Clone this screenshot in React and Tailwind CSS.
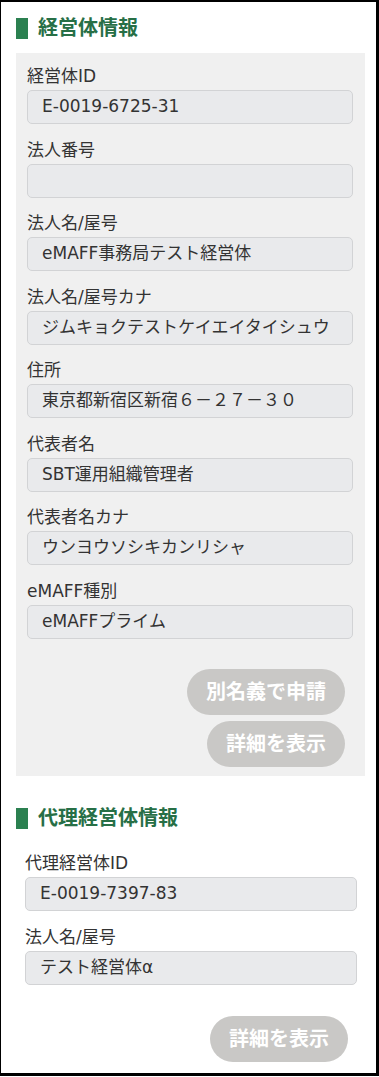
import React from 'react';

const FONT = { fontFamily: '"DejaVu Sans", "Noto Sans CJK JP", sans-serif' };

const agent = [
  { label: '経営体ID', value: 'E-0019-6725-31' },
  { label: '法人番号', value: '' },
  { label: '法人名/屋号', value: 'eMAFF事務局テスト経営体' },
  { label: '法人名/屋号カナ', value: 'ジムキョクテストケイエイタイシュウ' },
  { label: '住所', value: '東京都新宿区新宿６－２７－３０' },
  { label: '代表者名', value: 'SBT運用組織管理者' },
  { label: '代表者名カナ', value: 'ウンヨウソシキカンリシャ' },
  { label: 'eMAFF種別', value: 'eMAFFプライム' },
];

const proxy = [
  { label: '代理経営体ID', value: 'E-0019-7397-83' },
  { label: '法人名/屋号', value: 'テスト経営体α' },
];

const Heading = ({ children, className }) => (
  <div className={`flex items-center h-[21px] ${className}`}>
    <div className="w-[12px] h-[21px] shrink-0 bg-[#2b8050]" />
    <h2 className="ml-[10px] text-[20px] leading-[21px] font-bold text-[#276f46]">{children}</h2>
  </div>
);

const Field = ({ label, value, first }) => (
  <div className={first ? '' : 'mt-[13.5px]'}>
    <div className="text-[17px] leading-[24px] text-[#333] mb-[2px] whitespace-nowrap">{label}</div>
    <div className="h-[34px] rounded-[5px] border border-[#d2d3d5] bg-[#e9eaec] pl-[14px] flex items-center text-[17px] text-[#333] whitespace-nowrap overflow-hidden">
      {value}
    </div>
  </div>
);

const PillButton = ({ children, className }) => (
  <button className={`h-[46px] rounded-full bg-[#c9c8c6] text-white font-bold text-[20px] leading-none px-[19px] ${className || ''}`}>
    {children}
  </button>
);

export default function App() {
  return (
    <div className="w-[379px] h-[1077px] bg-white" style={FONT}>
      <div className="w-[379px] h-[1076px] border-t-2 border-l border-r-[3px] border-b-[3px] border-black">
        <Heading className="mt-[16px] ml-[15px]">経営体情報</Heading>

        <div className="mt-[14px] ml-[15px] w-[349px] bg-[#f0f0f0] pt-[11px] pl-[11px] pr-[12px] pb-[9px]">
          {agent.map((f, i) => (
            <Field key={f.label} {...f} first={i === 0} />
          ))}
          <div className="flex flex-col items-end gap-[6px] mt-[30px] mr-[8px]">
            <PillButton>別名義で申請</PillButton>
            <PillButton>詳細を表示</PillButton>
          </div>
        </div>

        <Heading className="mt-[32px] ml-[15px]">代理経営体情報</Heading>

        <div className="mt-[22.5px] ml-[24px] w-[332px]">
          {proxy.map((f, i) => (
            <Field key={f.label} {...f} first={i === 0} />
          ))}
          <div className="flex justify-end mt-[31px] mr-[9px]">
            <PillButton>詳細を表示</PillButton>
          </div>
        </div>
      </div>
    </div>
  );
}
